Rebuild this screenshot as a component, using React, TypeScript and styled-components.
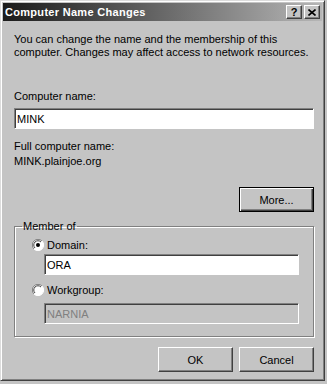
import styled, { createGlobalStyle } from "styled-components";

const GlobalStyle = createGlobalStyle`
  html, body {
    margin: 0;
    padding: 0;
    background: #c4c4c4;
  }

  body {
    font-family: "Liberation Sans", Arial, sans-serif;
    font-size: 11px;
    color: #000;
  }
`;

const Window = styled.div`
  width: 325px;
  height: 381px;
  box-sizing: border-box;
  border: 1px solid;
  border-color: #dcdcdc #404040 #404040 #dcdcdc;
  box-shadow: inset 1px 1px 0 #fff, inset -1px -1px 0 #808080;
  padding: 2px;
  background: #c4c4c4;
  display: flex;
  flex-direction: column;
`;

const TitleBar = styled.div`
  height: 18px;
  display: flex;
  align-items: center;
  padding: 0 2px;
  background: linear-gradient(to right, #1a1a1a, #b6b6b6);

  .title {
    color: #fff;
    font-weight: bold;
    letter-spacing: 0.3px;
    flex: 1;
  }
`;

const CaptionButton = styled.div`
  width: 16px;
  height: 14px;
  box-sizing: border-box;
  border: 1px solid;
  border-color: #fff #404040 #404040 #fff;
  box-shadow: inset -1px -1px 0 #808080;
  background: #c4c4c4;
  display: flex;
  align-items: center;
  justify-content: center;
  font-weight: bold;
  font-size: 11px;
  line-height: 1;
  margin-left: ${(p: { $gap?: number }) => p.$gap ?? 0}px;
`;

const Content = styled.div`
  flex: 1;
  padding: 12px 8px 0 11px;
  display: flex;
  flex-direction: column;
`;

const Text = styled.div<{ $top?: number }>`
  line-height: 13px;
  margin-top: ${(p) => p.$top ?? 0}px;
  white-space: nowrap;
`;

const Field = styled.input<{ $top?: number; $indent?: number }>`
  height: 21px;
  box-sizing: border-box;
  margin: ${(p) => p.$top ?? 0}px 0 0 ${(p) => p.$indent ?? 0}px;
  border: 1px solid;
  border-color: #808080 #fff #fff #808080;
  box-shadow: inset 1px 1px 0 #404040;
  padding: 1px 2px 0;
  font-family: inherit;
  font-size: 11px;
  color: #000;
  background: #fff;
  outline: none;

  &:disabled {
    background: #c4c4c4;
    color: #808080;
  }
`;

const ButtonRow = styled.div<{ $top: number }>`
  display: flex;
  justify-content: flex-end;
  gap: 6px;
  margin-top: ${(p) => p.$top}px;
`;

const Button = styled.button<{ $default?: boolean }>`
  width: 75px;
  height: 25px;
  box-sizing: border-box;
  font-family: inherit;
  font-size: 11px;
  color: #000;
  background: #c4c4c4;
  padding: 0;
  border: 1px solid;
  border-color: ${(p) => (p.$default ? "#000" : "#fff #404040 #404040 #fff")};
  box-shadow: ${(p) =>
    p.$default
      ? "inset 1px 1px 0 #fff, inset -1px -1px 0 #404040, inset -2px -2px 0 #808080"
      : "inset -1px -1px 0 #808080"};
`;

const Group = styled.fieldset`
  margin: 8px 0 0;
  padding: 5px 14px 12px 17px;
  border: 1px solid #808080;
  box-shadow: inset 1px 1px 0 #fff, 1px 1px 0 #fff;
  display: flex;
  flex-direction: column;

  legend {
    margin-left: -10px;
    padding: 0 1px;
    line-height: 13px;
  }
`;

const RadioRow = styled.label<{ $top?: number }>`
  display: flex;
  align-items: center;
  gap: 3px;
  height: 13px;
  margin-top: ${(p) => p.$top ?? 0}px;
`;

function Radio({ checked }: { checked?: boolean }) {
  return (
    <svg width="12" height="12" viewBox="0 0 12 12">
      <circle cx="6" cy="6" r="5.5" fill="#fff" />
      <path d="M10 2 A5.5 5.5 0 0 0 2 10" stroke="#808080" strokeWidth="1" fill="none" />
      <path d="M9 3 A4.2 4.2 0 0 0 3 9" stroke="#404040" strokeWidth="1" fill="none" />
      <path d="M2 10 A5.5 5.5 0 0 0 10 2" stroke="#fff" strokeWidth="1" fill="none" />
      {checked && <circle cx="6" cy="6" r="2" fill="#000" />}
    </svg>
  );
}

export default function App() {
  return (
    <>
      <GlobalStyle />
      <Window>
        <TitleBar>
          <span className="title">Computer Name Changes</span>
          <CaptionButton>?</CaptionButton>
          <CaptionButton $gap={2}>
            <svg width="8" height="7" viewBox="0 0 8 7">
              <path d="M0.5 0.5 L7.5 6.5 M7.5 0.5 L0.5 6.5" stroke="#000" strokeWidth="1.6" />
            </svg>
          </CaptionButton>
        </TitleBar>

        <Content>
          <Text>You can change the name and the membership of this</Text>
          <Text>computer. Changes may affect access to network resources.</Text>

          <Text $top={31}>Computer name:</Text>
          <Field $top={5} defaultValue="MINK" />

          <Text $top={11}>Full computer name:</Text>
          <Text $top={2}>MINK.plainjoe.org</Text>

          <ButtonRow $top={19}>
            <Button $default>More...</Button>
          </ButtonRow>

          <Group>
            <legend>Member of</legend>
            <RadioRow>
              <Radio checked />
              Domain:
            </RadioRow>
            <Field $top={3} $indent={12} defaultValue="ORA" />
            <RadioRow $top={8}>
              <Radio />
              Workgroup:
            </RadioRow>
            <Field $top={7} $indent={12} defaultValue="NARNIA" disabled />
          </Group>

          <ButtonRow $top={10}>
            <Button>OK</Button>
            <Button>Cancel</Button>
          </ButtonRow>
        </Content>
      </Window>
    </>
  );
}
